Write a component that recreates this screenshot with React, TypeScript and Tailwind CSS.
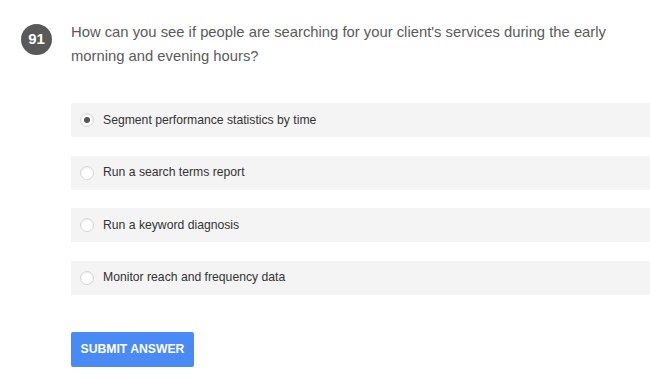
import React from "react";

const options = [
  "Segment performance statistics by time",
  "Run a search terms report",
  "Run a keyword diagnosis",
  "Monitor reach and frequency data",
];

export default function App() {
  const selected = 0;
  return (
    <div className="w-[650px] h-[381px] bg-white font-['Liberation_Sans',Arial,sans-serif] overflow-hidden">
      <div className="flex pt-[20px] pl-[21px]">
        <div className="mt-[4px] w-[31px] h-[31px] rounded-full bg-[#595959] text-white text-[15px] font-bold flex items-center justify-center shrink-0">
          91
        </div>
        <p className="ml-[19px] mr-[30px] text-[14.8px] leading-[24px] text-[#5a5a5a]">
          How can you see if people are searching for your client's services during the early morning and evening hours?
        </p>
      </div>
      <div className="ml-[71px] mt-[35px] flex flex-col gap-[18.5px]">
        {options.map((o, i) => (
          <div key={o} className="h-[34px] bg-[#f4f4f4] flex items-center pl-[9px]">
            <span className="w-[14px] h-[14px] rounded-full border border-[#d6d6d6] bg-white flex items-center justify-center shadow-[inset_0_1px_2px_rgba(0,0,0,0.08)]">
              {i === selected && <span className="w-[6px] h-[6px] rounded-full bg-[#555]" />}
            </span>
            <span className="ml-[9px] text-[12.2px] text-[#333]">{o}</span>
          </div>
        ))}
      </div>
      <button className="ml-[71px] mt-[37.5px] w-[123px] h-[35px] rounded-[2px] bg-[#4a8af4] text-white text-[12.2px] font-bold uppercase">
        Submit Answer
      </button>
    </div>
  );
}
